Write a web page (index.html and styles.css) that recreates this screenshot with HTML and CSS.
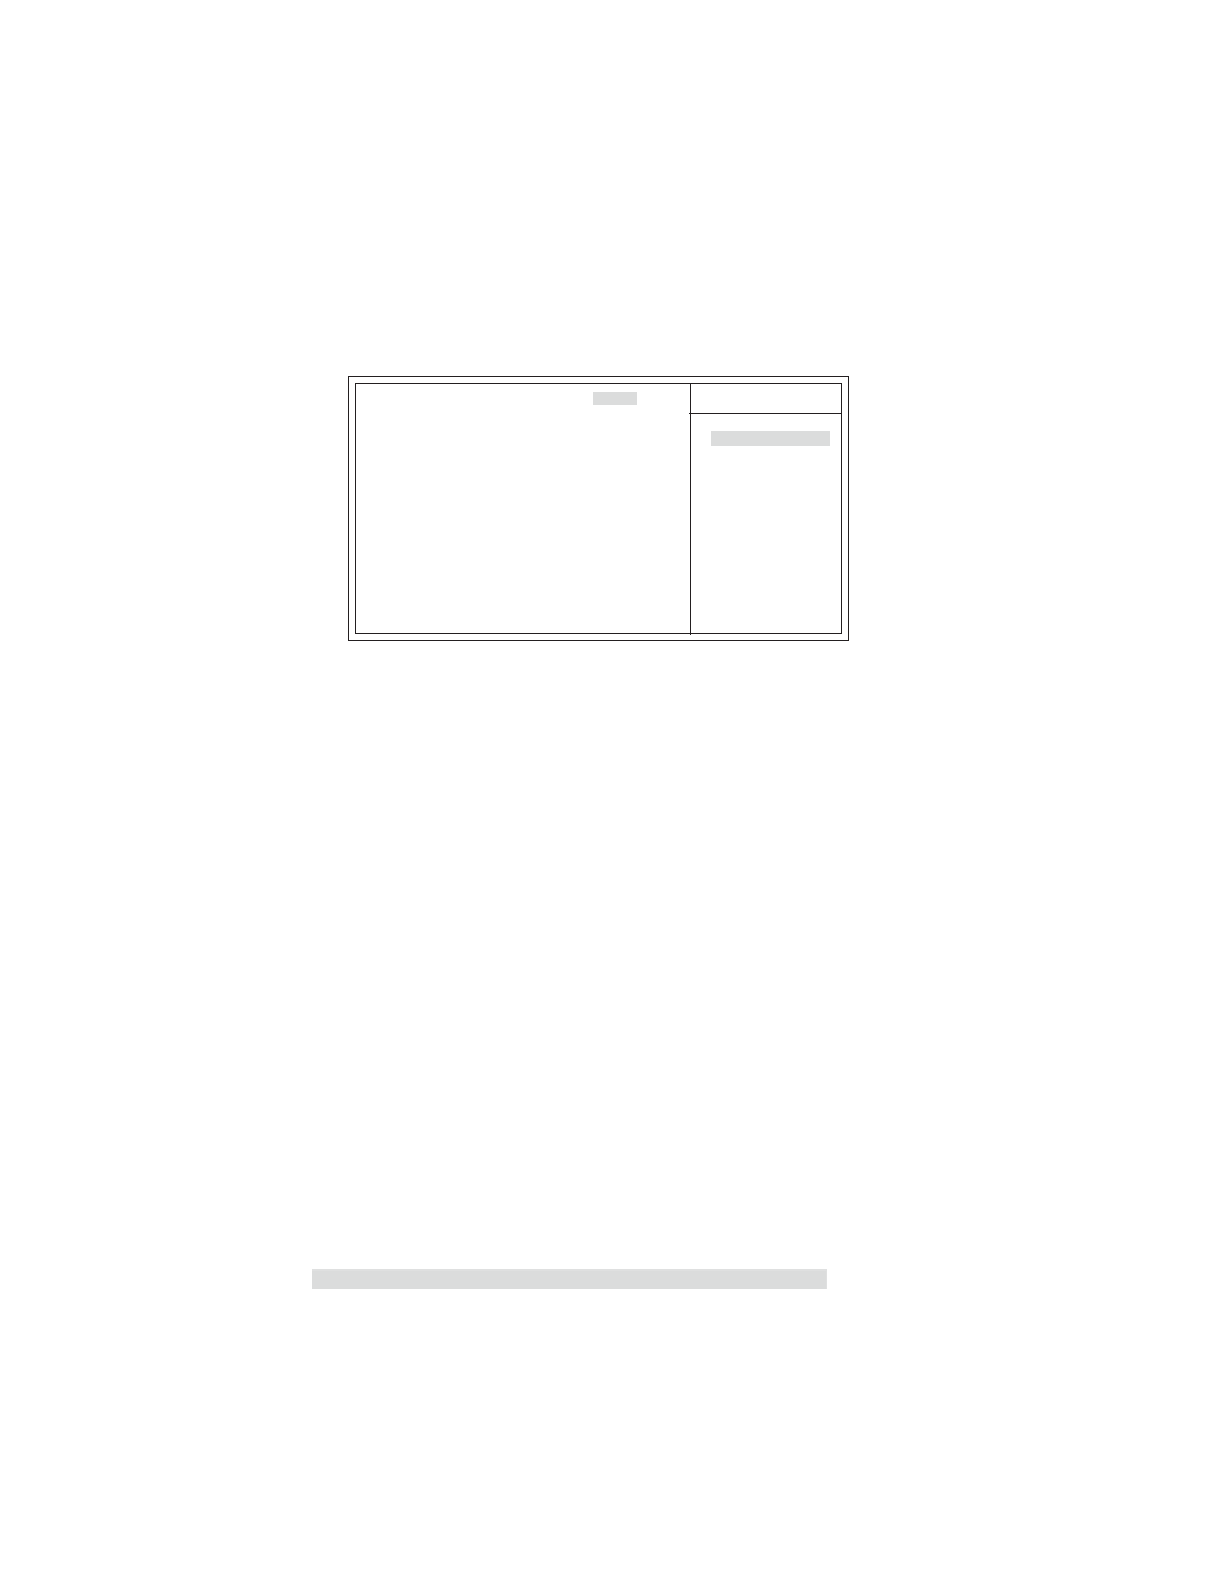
FILE: index.html
```html
<!DOCTYPE html>
<html lang="en">
<head>
<meta charset="utf-8">
<meta name="viewport" content="width=device-width, initial-scale=1">
<title>Setup screen</title>
<link rel="stylesheet" href="styles.css">
</head>
<body>
<main class="page">
  <section class="screen-row">
    <div class="screen">
      <div class="panels">
        <div class="options">
          <div class="selected-option"></div>
        </div>
        <aside class="help">
          <div class="help-header"></div>
          <div class="help-body">
            <div class="help-highlight"></div>
          </div>
        </aside>
      </div>
    </div>
  </section>
  <section class="band-row">
    <div class="band"></div>
  </section>
</main>
</body>
</html>
```
FILE: styles.css
```css
:root {
  --line: #231f20;
  --fill: #dbdcdc;
  --fill-light: #dfe0e0;
}

* {
  box-sizing: border-box;
}

body {
  margin: 0;
  background: #ffffff;
  font-family: "Liberation Sans", Arial, sans-serif;
}

.page {
  display: flex;
  flex-direction: column;
  gap: 628px;
  min-height: 100vh;
  padding: 376px 0 64px;
}

/* Both rows share the page width: left margin, content, right margin */
.screen-row {
  display: grid;
  grid-template-columns: 348fr 501fr 375fr;
}

.band-row {
  display: grid;
  grid-template-columns: 312fr 515fr 397fr;
}

.screen {
  grid-column: 2;
  padding: 6px;
  border: 1px solid var(--line);
}

.panels {
  display: grid;
  grid-template-columns: 334fr 151fr;
  min-height: 251px;
  border: 1px solid var(--line);
}

.options {
  display: flex;
  justify-content: flex-end;
  align-items: flex-start;
  padding: 8px 53px;
}

.selected-option {
  width: 44px;
  height: 13px;
  background: var(--fill);
}

/* The divider crosses the frame's lower line */
.help {
  margin-bottom: -2px;
  border-left: 1px solid var(--line);
}

.help-header {
  height: 30px;
  margin-left: -2px;
  border-bottom: 1px solid var(--line);
}

.help-body {
  padding: 17px 11px 17px 20px;
}

.help-highlight {
  height: 15px;
  background: var(--fill);
}

.band {
  grid-column: 2;
  height: 20px;
  border-top: 2px solid var(--fill-light);
  border-right: 1px solid var(--fill-light);
  background: var(--fill);
}
```
